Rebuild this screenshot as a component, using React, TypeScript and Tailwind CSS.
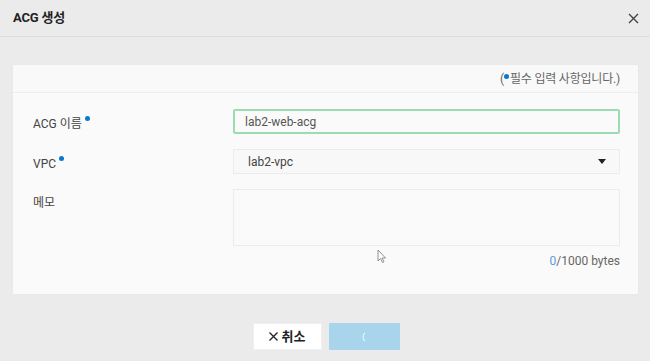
import React from "react";

const Dot = () => (
  <span className="inline-block w-[5px] h-[5px] rounded-full bg-[#0a78cc] align-top mt-[1px] ml-[3px]" />
);

export default function App() {
  return (
    <div
      className="w-[650px] h-[361px] bg-[#ebebeb] flex flex-col text-[#333]"
      style={{ fontFamily: 'Roboto, "Noto Sans CJK KR", sans-serif' }}
    >
      <div className="h-[37px] shrink-0 flex items-center justify-between pl-[13px] pr-[11px] border-b border-[#dedede]">
        <div className="text-[13px] font-bold text-[#222] tracking-[-0.2px]">ACG 생성</div>
        <svg width="11" height="11" viewBox="0 0 11 11" className="mt-[1px]">
          <path d="M1 1L10 10M10 1L1 10" stroke="#444" strokeWidth="1.4" />
        </svg>
      </div>

      <div className="pt-[28px] pl-[13px] pr-[12px]">
        <div className="bg-[#fafafa] shadow-[0_0_1px_rgba(0,0,0,0.06)] flex flex-col">
          <div className="h-[28px] flex items-center justify-end pr-[18px] border-b border-[#eeeeee] bg-[#f9f9f9]">
            <span className="text-[12px] text-[#666] tracking-[-0.2px]">
              (<span className="inline-block w-[5px] h-[5px] rounded-full bg-[#0a78cc] align-top mt-[4px] mr-[1px]" />필수 입력 사항입니다.)
            </span>
          </div>
          <div className="flex flex-col pt-[16px] pb-[24px] pl-[20px] pr-[18px] gap-[15px]">
            <div className="flex">
              <div className="w-[200px] shrink-0 text-[12px] text-[#444] pt-[6px]">
                ACG 이름<Dot />
              </div>
              <div className="flex-1 h-[25px] border-2 border-solid border-[#9ddcb3] rounded-[2px] bg-[#fafafa] flex items-center pl-[10px] text-[12px] text-[#555]">
                lab2-web-acg
              </div>
            </div>
            <div className="flex">
              <div className="w-[200px] shrink-0 text-[12px] text-[#444] pt-[6px]">
                VPC<Dot />
              </div>
              <div className="flex-1 h-[25px] border border-[#ececec] bg-[#f8f8f8] flex items-center justify-between pl-[14px] pr-[13px] text-[12px] text-[#444]">
                <span>lab2-vpc</span>
                <svg width="8" height="5" viewBox="0 0 8 5">
                  <path d="M0 0H8L4 5Z" fill="#222" />
                </svg>
              </div>
            </div>
            <div className="flex flex-col">
              <div className="flex">
                <div className="w-[200px] shrink-0 text-[12px] text-[#444] pt-[5px]">메모</div>
                <div className="flex-1 h-[57px] border border-[#ececec] bg-[#fafafa]" />
              </div>
              <div className="flex justify-end mt-[6px] text-[12px] text-[#666] relative">
                <svg
                  width="11"
                  height="15"
                  viewBox="0 0 11 15"
                  className="absolute left-[344px] top-[-3px]"
                >
                  <path
                    d="M1 1V12L3.5 9.5L5.5 13.5L7 12.8L5 9H8.5Z"
                    fill="#fff"
                    stroke="#777"
                    strokeWidth="0.8"
                    strokeLinejoin="round"
                  />
                </svg>
                <span>
                  <span className="text-[#5b9bd5]">0</span>/1000 bytes
                </span>
              </div>
            </div>
          </div>
        </div>
      </div>

      <div className="flex justify-center gap-[7px] pt-[29px] pl-[2px]">
        <div className="w-[69px] h-[27px] bg-white border border-[#f0f0f0] flex items-center justify-center gap-[4px] text-[13px] font-bold text-[#222]">
          <svg width="9" height="9" viewBox="0 0 9 9">
            <path d="M0.5 0.5L8.5 8.5M8.5 0.5L0.5 8.5" stroke="#222" strokeWidth="1.3" />
          </svg>
          <span>취소</span>
        </div>
        <div className="w-[71px] h-[27px] bg-[#a8d5eb] rounded-[1px] flex items-center justify-center">
          <svg width="8" height="10" viewBox="0 0 8 10">
            <path d="M5 1C2.5 2.5 2.5 7.5 5 9" stroke="#e4f3fa" strokeWidth="1.2" fill="none" />
          </svg>
        </div>
      </div>
    </div>
  );
}
